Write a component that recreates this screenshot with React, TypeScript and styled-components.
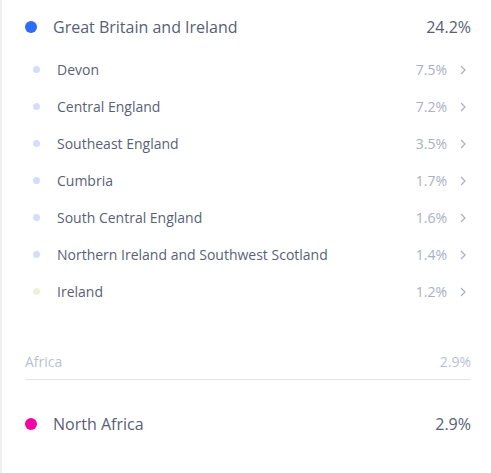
import React from "react";
import styled, { createGlobalStyle } from "styled-components";

const Global = createGlobalStyle`
  html, body { margin: 0; padding: 0; background: #fff; }
  body { font-family: "Open Sans", "Noto Sans", sans-serif; }
`;

const Panel = styled.div`
  box-sizing: border-box;
  width: 491px;
  height: 473px;
  border-left: 2px solid #efefef;
  padding: 15px 20px 0 23px;
  display: flex;
  flex-direction: column;
`;

const MainRow = styled.div<{ $mt?: number }>`
  display: flex;
  align-items: center;
  height: 24px;
  margin-top: ${(p) => p.$mt ?? 0}px;
  font-size: 16px;
  color: #585e78;
`;

const Dot = styled.span<{ $color: string; $size: number }>`
  flex: none;
  width: ${(p) => p.$size}px;
  height: ${(p) => p.$size}px;
  border-radius: 50%;
  background: ${(p) => p.$color};
`;

const MainLabel = styled.span`
  flex: 1;
  margin-left: 16px;
`;

const MainValue = styled.span``;

const SubList = styled.div`
  display: flex;
  flex-direction: column;
  margin-top: 12px;
`;

const SubRow = styled.div`
  display: flex;
  align-items: center;
  height: 37px;
  padding-left: 8px;
  font-size: 14px;
  color: #5a5f79;
`;

const SubLabel = styled.span`
  flex: 1;
  margin-left: 17px;
`;

const SubValue = styled.span`
  color: #a9b0c6;
`;

const Chevron = styled.svg`
  margin-left: 12px;
  margin-right: 4px;
  width: 8px;
  height: 12px;
  flex: none;
`;

const GroupHeader = styled.div`
  display: flex;
  justify-content: space-between;
  align-items: center;
  margin-top: 41px;
  height: 20px;
  padding-bottom: 8px;
  border-bottom: 1px solid #e2e4ec;
  font-size: 14px;
  color: #b9bfd4;
`;

const subs: [string, string, string][] = [
  ["Devon", "7.5%", "#d3defb"],
  ["Central England", "7.2%", "#d3defb"],
  ["Southeast England", "3.5%", "#d3defb"],
  ["Cumbria", "1.7%", "#d3defb"],
  ["South Central England", "1.6%", "#d3defb"],
  ["Northern Ireland and Southwest Scotland", "1.4%", "#d3defb"],
  ["Ireland", "1.2%", "#eaf3d9"],
];

export default function App() {
  return (
    <>
      <Global />
      <Panel>
        <MainRow>
          <Dot $color="#2c6cf6" $size={12} />
          <MainLabel>Great Britain and Ireland</MainLabel>
          <MainValue>24.2%</MainValue>
        </MainRow>
        <SubList>
          {subs.map(([name, val, c]) => (
            <SubRow key={name}>
              <Dot $color={c} $size={7} />
              <SubLabel>{name}</SubLabel>
              <SubValue>{val}</SubValue>
              <Chevron viewBox="0 0 8 12">
                <path d="M2 2 L6 6 L2 10" fill="none" stroke="#a9b0c6" strokeWidth="1.2" />
              </Chevron>
            </SubRow>
          ))}
        </SubList>
        <GroupHeader>
          <span>Africa</span>
          <span>2.9%</span>
        </GroupHeader>
        <MainRow $mt={32}>
          <Dot $color="#f505a3" $size={12} />
          <MainLabel>North Africa</MainLabel>
          <MainValue>2.9%</MainValue>
        </MainRow>
      </Panel>
    </>
  );
}
